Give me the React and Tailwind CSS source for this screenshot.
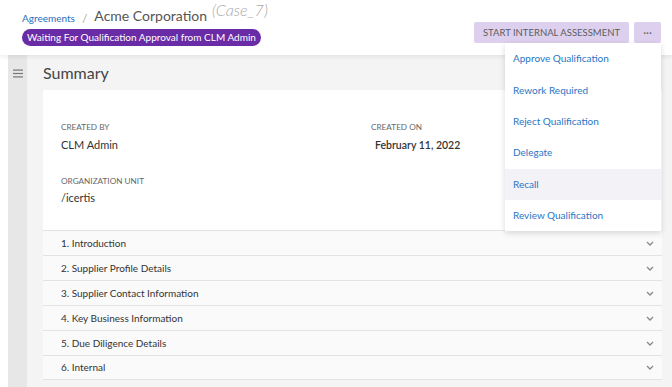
export default function App() {
  const rows = [
    "1. Introduction",
    "2. Supplier Profile Details",
    "3. Supplier Contact Information",
    "4. Key Business Information",
    "5. Due Diligence Details",
    "6. Internal",
  ];
  const menu = [
    "Approve Qualification",
    "Rework Required",
    "Reject Qualification",
    "Delegate",
    "Recall",
    "Review Qualification",
  ];
  return (
    <div className="w-[672px] h-[387px] overflow-hidden bg-white flex flex-col font-['Lato','Noto_Sans',sans-serif]">
      <header className="relative z-10 h-[55px] shrink-0 bg-white shadow-[0_2px_4px_rgba(0,0,0,0.07)] flex justify-between pl-[22px] pr-[11px]">
        <div className="flex flex-col pt-[5px]">
          <div className="flex items-start h-[22px]">
            <span className="text-[10px] leading-[14px] text-[#1f70c1] mt-[6px]">Agreements</span>
            <span className="text-[12px] leading-[14px] text-[#aaa] mx-[7px] mt-[7px]">/</span>
            <span className="text-[14px] leading-[20px] text-[#555] mt-[1px]">Acme Corporation</span>
            <span className="text-[16px] leading-[16px] italic text-[#aaa] ml-[5px] -mt-[3px] font-light">(Case_7)</span>
          </div>
          <div className="mt-[2px] h-[17px] px-[5px] rounded-full bg-[#6a2ca6] text-white text-[10px] leading-[17px] self-start">
            Waiting For Qualification Approval from CLM Admin
          </div>
        </div>
        <div className="relative pt-[22px] flex gap-[5px] items-start">
          <button className="h-[21px] px-[9px] bg-[#dcd0ee] text-[#5c5c5c] text-[9.5px] leading-[21px] rounded-[2px]">
            START INTERNAL ASSESSMENT
          </button>
          <button className="h-[21px] w-[27px] bg-[#dcd0ee] text-[#666] text-[11px] leading-[18px] rounded-[2px]">
            ···
          </button>
          <div className="absolute top-[43px] right-[0px] w-[156px] bg-white shadow-[0_2px_6px_rgba(0,0,0,0.15)]">
            {menu.map((m) => (
              <div
                key={m}
                className={`h-[31.4px] flex items-center px-[8px] text-[10px] text-[#2a76c6] ${m === "Recall" ? "bg-[#f3f2f7]" : ""}`}
              >
                {m}
              </div>
            ))}
          </div>
        </div>
      </header>
      <div className="flex flex-1">
        <div className="w-[8px] bg-white" />
        <div className="w-[19px] bg-[#e7e7e7] flex justify-center pt-[14px]">
          <svg width="10" height="9" viewBox="0 0 10 9">
            <rect x="0" y="0.5" width="10" height="1.2" fill="#777" />
            <rect x="0" y="3.9" width="10" height="1.2" fill="#777" />
            <rect x="0" y="7.3" width="10" height="1.2" fill="#777" />
          </svg>
        </div>
        <main className="flex-1 bg-[#f4f4f4] pl-[16px] pr-[10px] pt-[8px]">
          <h1 className="text-[16px] leading-[20px] text-[#444] mb-[7px]">Summary</h1>
          <div className="bg-white">
            <div className="h-[140px] px-[18px] pt-[31px] grid grid-cols-[310px_1fr]">
              <div>
                <div className="text-[8.2px] leading-[12px] text-[#666]">CREATED BY</div>
                <div className="mt-[4px] text-[11px] leading-[16px] text-[#333]">CLM Admin</div>
                <div className="mt-[22px] text-[8.2px] leading-[12px] text-[#666]">ORGANIZATION UNIT</div>
                <div className="mt-[3px] text-[11px] leading-[16px] text-[#333]">/icertis</div>
              </div>
              <div>
                <div className="text-[8.2px] leading-[12px] text-[#666]">CREATED ON</div>
                <div className="mt-[4px] pl-[4px] text-[10.5px] leading-[16px] text-[#333] font-semibold">February 11, 2022</div>
              </div>
            </div>
            {rows.map((r, i) => (
              <div
                key={r}
                className={`h-[25px] border-t border-[#e3e3e3] bg-[#fafafa] flex items-center justify-between pl-[18px] pr-[8px] ${i === rows.length - 1 ? "border-b" : ""}`}
              >
                <span className="text-[10px] text-[#333]">{r}</span>
                <svg width="8" height="5" viewBox="0 0 8 5">
                  <path d="M1 1 L4 4 L7 1" stroke="#888" strokeWidth="1.3" fill="none" />
                </svg>
              </div>
            ))}
          </div>
        </main>
      </div>
    </div>
  );
}
